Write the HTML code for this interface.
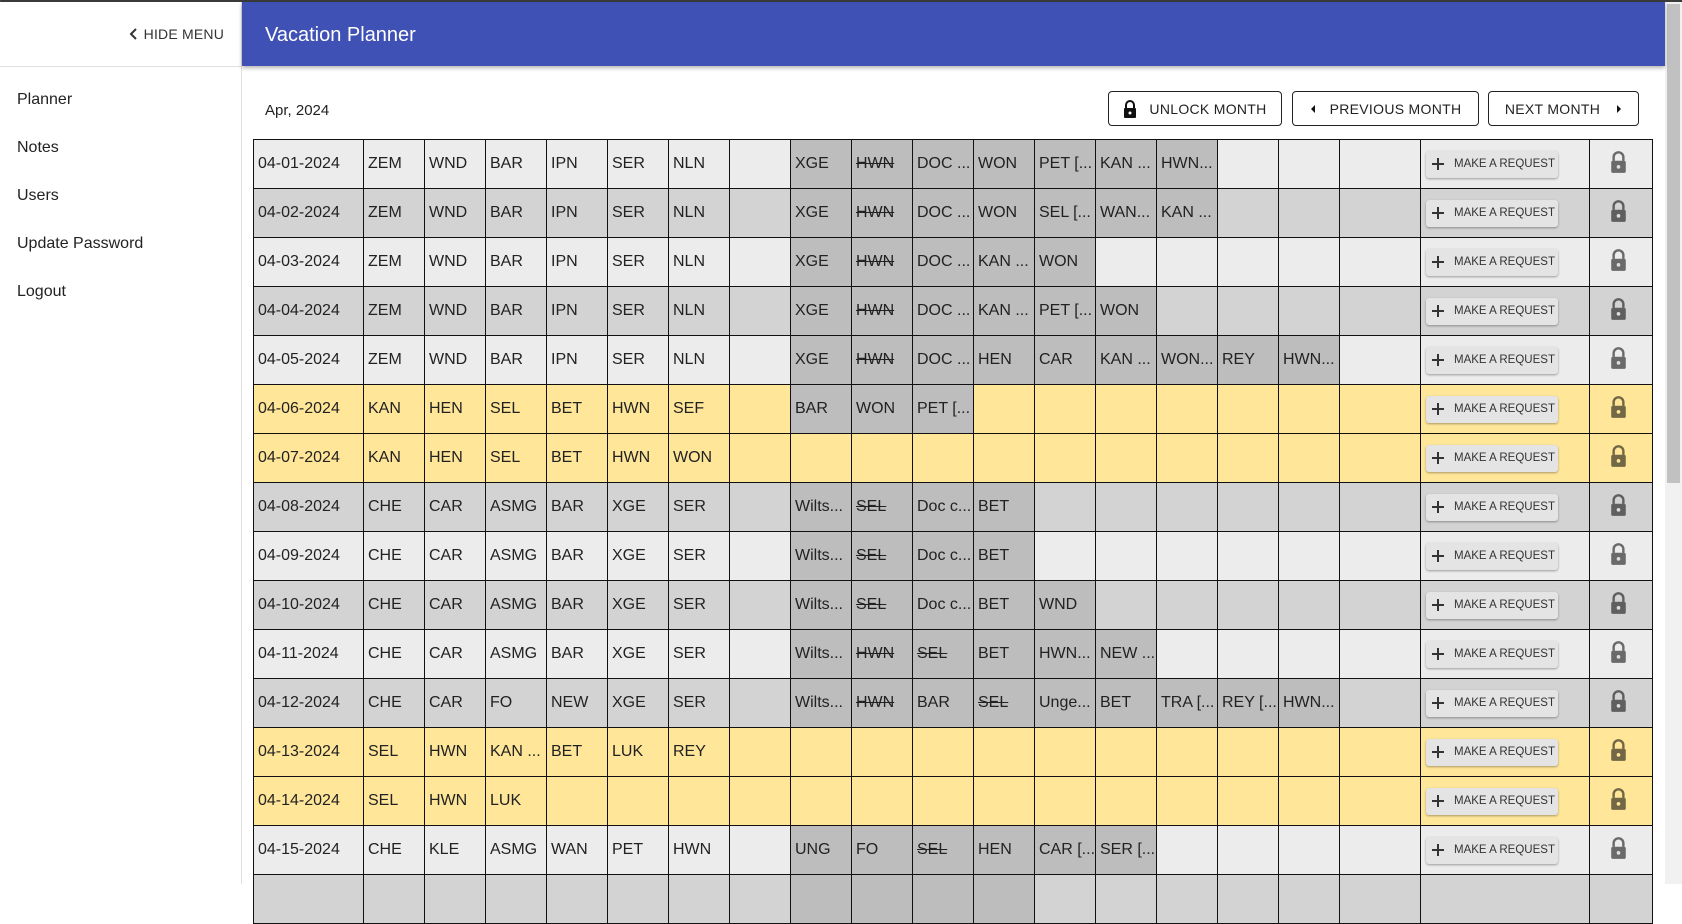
<!DOCTYPE html>
<html><head><meta charset="utf-8"><style>
*{box-sizing:border-box;margin:0;padding:0}
html,body{width:1682px;height:884px;overflow:hidden;background:#fff;font-family:"Liberation Sans",sans-serif;color:#222}
#frame{position:absolute;left:0;top:0;width:1682px;height:884px;border-top:2px solid #3a3a3a;border-left:1px solid #555}
#side{position:absolute;left:0;top:2px;width:242px;height:882px;border-right:1px solid #e0e0e0;background:#fff}
#hide{position:absolute;right:17px;top:24px;font-size:14px;color:#333;letter-spacing:.2px}
#hide svg{vertical-align:-1px;margin-right:6px}
#side .div{position:absolute;left:0;top:64px;width:242px;height:1px;background:#e0e0e0}
#side a{position:absolute;left:17px;font-size:16px;color:#222;text-decoration:none}
#hdr{position:absolute;left:242px;top:2px;width:1423px;height:64px;background:#3f51b5;box-shadow:0 2px 4px rgba(0,0,0,.3);color:#fff;font-size:20px;padding:22px 0 0 23px;z-index:2}
#month{position:absolute;left:265px;top:102px;font-size:15px;color:#222}
.btn{position:absolute;top:91px;height:35px;border:1px solid #222;border-radius:4px;font-size:14px;color:#222;display:flex;align-items:center;justify-content:center;letter-spacing:.3px;background:#fff}
#tbl{position:absolute;left:253px;top:139px;border-collapse:collapse;table-layout:fixed;width:1399px}
#tbl td{border:1px solid #111;height:49px;padding:0 4px;font-size:16px;white-space:nowrap;overflow:hidden;color:#222}
tr.l td{background:#ececec}
tr.d td{background:#d3d3d3}
tr.y td{background:#ffe699}
#tbl td.g{background:#bdbdbd}
s{text-decoration:line-through}
.rq{display:inline-flex;align-items:center;height:27px;width:132px;background:#e4e4e4;border-radius:3px;box-shadow:0 1px 2px rgba(0,0,0,.35);font-size:11.5px;color:#333;padding-left:6px;margin-left:1px}
.rq svg{margin-right:10px}
td.lk{text-align:center;padding-right:10px!important}
#sb{position:absolute;left:1665px;top:2px;width:17px;height:882px;background:#f1f1f1}
#th{position:absolute;left:1667px;top:4px;width:13px;height:479px;background:#c1c1c1}
</style></head><body>
<div id="frame"></div>
<div id="side">
<div id="hide"><svg width="9" height="12" viewBox="0 0 9 12"><path d="M7 1L2 6l5 5" stroke="#333" stroke-width="2" fill="none"/></svg>HIDE MENU</div>
<div class="div"></div>
<a style="top:89px">Planner</a>
<a style="top:137px">Notes</a>
<a style="top:185px">Users</a>
<a style="top:233px">Update Password</a>
<a style="top:281px">Logout</a>
</div>
<div id="hdr">Vacation Planner</div>
<div id="month">Apr, 2024</div>
<div class="btn" style="left:1108px;width:174px"><svg width="14" height="18" viewBox="0 0 14 18" style="margin-right:12px"><path d="M3 8V5a4 4 0 0 1 8 0v3" stroke="#111" stroke-width="2" fill="none"/><rect x="1" y="8" width="12" height="10" rx="1" fill="#111"/><circle cx="7" cy="13" r="1.5" fill="#fff"/></svg>UNLOCK MONTH</div>
<div class="btn" style="left:1292px;width:187px"><svg width="6" height="10" viewBox="0 0 6 10" style="margin-right:14px"><path d="M5 1L1 5l4 4z" fill="#111"/></svg>PREVIOUS MONTH</div>
<div class="btn" style="left:1488px;width:151px">NEXT MONTH<svg width="6" height="10" viewBox="0 0 6 10" style="margin-left:16px"><path d="M1 1l4 4-4 4z" fill="#111"/></svg></div>

<table id="tbl">
<colgroup><col style="width:110px"><col style="width:61px"><col style="width:61px"><col style="width:61px"><col style="width:61px"><col style="width:61px"><col style="width:61px"><col style="width:61px"><col style="width:61px"><col style="width:61px"><col style="width:61px"><col style="width:61px"><col style="width:61px"><col style="width:61px"><col style="width:61px"><col style="width:61px"><col style="width:61px"><col style="width:81px"><col style="width:169px"><col style="width:63px"></colgroup>
<tr class="l"><td>04-01-2024</td><td>ZEM</td><td>WND</td><td>BAR</td><td>IPN</td><td>SER</td><td>NLN</td><td></td><td class="g">XGE</td><td class="g"><s>HWN</s></td><td class="g">DOC ...</td><td class="g">WON</td><td class="g">PET [...</td><td class="g">KAN ...</td><td class="g">HWN...</td><td></td><td></td><td></td><td><span class="rq"><svg width="12" height="12"><path d="M6 0v12M0 6h12" stroke="#333" stroke-width="2"/></svg>MAKE A REQUEST</span></td><td class="lk"><svg width="17" height="22" viewBox="0 0 14 18"><path d="M3 8V5a4 4 0 0 1 8 0v3" stroke="rgba(0,0,0,.55)" stroke-width="2" fill="none"/><rect x="1" y="8" width="12" height="10" rx="1.5" fill="rgba(0,0,0,.55)"/><circle cx="7" cy="13" r="1.5" fill="#ddd"/></svg></td></tr>
<tr class="d"><td>04-02-2024</td><td>ZEM</td><td>WND</td><td>BAR</td><td>IPN</td><td>SER</td><td>NLN</td><td></td><td class="g">XGE</td><td class="g"><s>HWN</s></td><td class="g">DOC ...</td><td class="g">WON</td><td class="g">SEL [...</td><td class="g">WAN...</td><td class="g">KAN ...</td><td></td><td></td><td></td><td><span class="rq"><svg width="12" height="12"><path d="M6 0v12M0 6h12" stroke="#333" stroke-width="2"/></svg>MAKE A REQUEST</span></td><td class="lk"><svg width="17" height="22" viewBox="0 0 14 18"><path d="M3 8V5a4 4 0 0 1 8 0v3" stroke="rgba(0,0,0,.55)" stroke-width="2" fill="none"/><rect x="1" y="8" width="12" height="10" rx="1.5" fill="rgba(0,0,0,.55)"/><circle cx="7" cy="13" r="1.5" fill="#ddd"/></svg></td></tr>
<tr class="l"><td>04-03-2024</td><td>ZEM</td><td>WND</td><td>BAR</td><td>IPN</td><td>SER</td><td>NLN</td><td></td><td class="g">XGE</td><td class="g"><s>HWN</s></td><td class="g">DOC ...</td><td class="g">KAN ...</td><td class="g">WON</td><td></td><td></td><td></td><td></td><td></td><td><span class="rq"><svg width="12" height="12"><path d="M6 0v12M0 6h12" stroke="#333" stroke-width="2"/></svg>MAKE A REQUEST</span></td><td class="lk"><svg width="17" height="22" viewBox="0 0 14 18"><path d="M3 8V5a4 4 0 0 1 8 0v3" stroke="rgba(0,0,0,.55)" stroke-width="2" fill="none"/><rect x="1" y="8" width="12" height="10" rx="1.5" fill="rgba(0,0,0,.55)"/><circle cx="7" cy="13" r="1.5" fill="#ddd"/></svg></td></tr>
<tr class="d"><td>04-04-2024</td><td>ZEM</td><td>WND</td><td>BAR</td><td>IPN</td><td>SER</td><td>NLN</td><td></td><td class="g">XGE</td><td class="g"><s>HWN</s></td><td class="g">DOC ...</td><td class="g">KAN ...</td><td class="g">PET [...</td><td class="g">WON</td><td></td><td></td><td></td><td></td><td><span class="rq"><svg width="12" height="12"><path d="M6 0v12M0 6h12" stroke="#333" stroke-width="2"/></svg>MAKE A REQUEST</span></td><td class="lk"><svg width="17" height="22" viewBox="0 0 14 18"><path d="M3 8V5a4 4 0 0 1 8 0v3" stroke="rgba(0,0,0,.55)" stroke-width="2" fill="none"/><rect x="1" y="8" width="12" height="10" rx="1.5" fill="rgba(0,0,0,.55)"/><circle cx="7" cy="13" r="1.5" fill="#ddd"/></svg></td></tr>
<tr class="l"><td>04-05-2024</td><td>ZEM</td><td>WND</td><td>BAR</td><td>IPN</td><td>SER</td><td>NLN</td><td></td><td class="g">XGE</td><td class="g"><s>HWN</s></td><td class="g">DOC ...</td><td class="g">HEN</td><td class="g">CAR</td><td class="g">KAN ...</td><td class="g">WON...</td><td class="g">REY</td><td class="g">HWN...</td><td></td><td><span class="rq"><svg width="12" height="12"><path d="M6 0v12M0 6h12" stroke="#333" stroke-width="2"/></svg>MAKE A REQUEST</span></td><td class="lk"><svg width="17" height="22" viewBox="0 0 14 18"><path d="M3 8V5a4 4 0 0 1 8 0v3" stroke="rgba(0,0,0,.55)" stroke-width="2" fill="none"/><rect x="1" y="8" width="12" height="10" rx="1.5" fill="rgba(0,0,0,.55)"/><circle cx="7" cy="13" r="1.5" fill="#ddd"/></svg></td></tr>
<tr class="y"><td>04-06-2024</td><td>KAN</td><td>HEN</td><td>SEL</td><td>BET</td><td>HWN</td><td>SEF</td><td></td><td class="g">BAR</td><td class="g">WON</td><td class="g">PET [...</td><td></td><td></td><td></td><td></td><td></td><td></td><td></td><td><span class="rq"><svg width="12" height="12"><path d="M6 0v12M0 6h12" stroke="#333" stroke-width="2"/></svg>MAKE A REQUEST</span></td><td class="lk"><svg width="17" height="22" viewBox="0 0 14 18"><path d="M3 8V5a4 4 0 0 1 8 0v3" stroke="rgba(0,0,0,.55)" stroke-width="2" fill="none"/><rect x="1" y="8" width="12" height="10" rx="1.5" fill="rgba(0,0,0,.55)"/><circle cx="7" cy="13" r="1.5" fill="#ffe699"/></svg></td></tr>
<tr class="y"><td>04-07-2024</td><td>KAN</td><td>HEN</td><td>SEL</td><td>BET</td><td>HWN</td><td>WON</td><td></td><td></td><td></td><td></td><td></td><td></td><td></td><td></td><td></td><td></td><td></td><td><span class="rq"><svg width="12" height="12"><path d="M6 0v12M0 6h12" stroke="#333" stroke-width="2"/></svg>MAKE A REQUEST</span></td><td class="lk"><svg width="17" height="22" viewBox="0 0 14 18"><path d="M3 8V5a4 4 0 0 1 8 0v3" stroke="rgba(0,0,0,.55)" stroke-width="2" fill="none"/><rect x="1" y="8" width="12" height="10" rx="1.5" fill="rgba(0,0,0,.55)"/><circle cx="7" cy="13" r="1.5" fill="#ffe699"/></svg></td></tr>
<tr class="d"><td>04-08-2024</td><td>CHE</td><td>CAR</td><td>ASMG</td><td>BAR</td><td>XGE</td><td>SER</td><td></td><td class="g">Wilts...</td><td class="g"><s>SEL</s></td><td class="g">Doc c...</td><td class="g">BET</td><td></td><td></td><td></td><td></td><td></td><td></td><td><span class="rq"><svg width="12" height="12"><path d="M6 0v12M0 6h12" stroke="#333" stroke-width="2"/></svg>MAKE A REQUEST</span></td><td class="lk"><svg width="17" height="22" viewBox="0 0 14 18"><path d="M3 8V5a4 4 0 0 1 8 0v3" stroke="rgba(0,0,0,.55)" stroke-width="2" fill="none"/><rect x="1" y="8" width="12" height="10" rx="1.5" fill="rgba(0,0,0,.55)"/><circle cx="7" cy="13" r="1.5" fill="#ddd"/></svg></td></tr>
<tr class="l"><td>04-09-2024</td><td>CHE</td><td>CAR</td><td>ASMG</td><td>BAR</td><td>XGE</td><td>SER</td><td></td><td class="g">Wilts...</td><td class="g"><s>SEL</s></td><td class="g">Doc c...</td><td class="g">BET</td><td></td><td></td><td></td><td></td><td></td><td></td><td><span class="rq"><svg width="12" height="12"><path d="M6 0v12M0 6h12" stroke="#333" stroke-width="2"/></svg>MAKE A REQUEST</span></td><td class="lk"><svg width="17" height="22" viewBox="0 0 14 18"><path d="M3 8V5a4 4 0 0 1 8 0v3" stroke="rgba(0,0,0,.55)" stroke-width="2" fill="none"/><rect x="1" y="8" width="12" height="10" rx="1.5" fill="rgba(0,0,0,.55)"/><circle cx="7" cy="13" r="1.5" fill="#ddd"/></svg></td></tr>
<tr class="d"><td>04-10-2024</td><td>CHE</td><td>CAR</td><td>ASMG</td><td>BAR</td><td>XGE</td><td>SER</td><td></td><td class="g">Wilts...</td><td class="g"><s>SEL</s></td><td class="g">Doc c...</td><td class="g">BET</td><td class="g">WND</td><td></td><td></td><td></td><td></td><td></td><td><span class="rq"><svg width="12" height="12"><path d="M6 0v12M0 6h12" stroke="#333" stroke-width="2"/></svg>MAKE A REQUEST</span></td><td class="lk"><svg width="17" height="22" viewBox="0 0 14 18"><path d="M3 8V5a4 4 0 0 1 8 0v3" stroke="rgba(0,0,0,.55)" stroke-width="2" fill="none"/><rect x="1" y="8" width="12" height="10" rx="1.5" fill="rgba(0,0,0,.55)"/><circle cx="7" cy="13" r="1.5" fill="#ddd"/></svg></td></tr>
<tr class="l"><td>04-11-2024</td><td>CHE</td><td>CAR</td><td>ASMG</td><td>BAR</td><td>XGE</td><td>SER</td><td></td><td class="g">Wilts...</td><td class="g"><s>HWN</s></td><td class="g"><s>SEL</s></td><td class="g">BET</td><td class="g">HWN...</td><td class="g">NEW ...</td><td></td><td></td><td></td><td></td><td><span class="rq"><svg width="12" height="12"><path d="M6 0v12M0 6h12" stroke="#333" stroke-width="2"/></svg>MAKE A REQUEST</span></td><td class="lk"><svg width="17" height="22" viewBox="0 0 14 18"><path d="M3 8V5a4 4 0 0 1 8 0v3" stroke="rgba(0,0,0,.55)" stroke-width="2" fill="none"/><rect x="1" y="8" width="12" height="10" rx="1.5" fill="rgba(0,0,0,.55)"/><circle cx="7" cy="13" r="1.5" fill="#ddd"/></svg></td></tr>
<tr class="d"><td>04-12-2024</td><td>CHE</td><td>CAR</td><td>FO</td><td>NEW</td><td>XGE</td><td>SER</td><td></td><td class="g">Wilts...</td><td class="g"><s>HWN</s></td><td class="g">BAR</td><td class="g"><s>SEL</s></td><td class="g">Unge...</td><td class="g">BET</td><td class="g">TRA [...</td><td class="g">REY [...</td><td class="g">HWN...</td><td></td><td><span class="rq"><svg width="12" height="12"><path d="M6 0v12M0 6h12" stroke="#333" stroke-width="2"/></svg>MAKE A REQUEST</span></td><td class="lk"><svg width="17" height="22" viewBox="0 0 14 18"><path d="M3 8V5a4 4 0 0 1 8 0v3" stroke="rgba(0,0,0,.55)" stroke-width="2" fill="none"/><rect x="1" y="8" width="12" height="10" rx="1.5" fill="rgba(0,0,0,.55)"/><circle cx="7" cy="13" r="1.5" fill="#ddd"/></svg></td></tr>
<tr class="y"><td>04-13-2024</td><td>SEL</td><td>HWN</td><td>KAN ...</td><td>BET</td><td>LUK</td><td>REY</td><td></td><td></td><td></td><td></td><td></td><td></td><td></td><td></td><td></td><td></td><td></td><td><span class="rq"><svg width="12" height="12"><path d="M6 0v12M0 6h12" stroke="#333" stroke-width="2"/></svg>MAKE A REQUEST</span></td><td class="lk"><svg width="17" height="22" viewBox="0 0 14 18"><path d="M3 8V5a4 4 0 0 1 8 0v3" stroke="rgba(0,0,0,.55)" stroke-width="2" fill="none"/><rect x="1" y="8" width="12" height="10" rx="1.5" fill="rgba(0,0,0,.55)"/><circle cx="7" cy="13" r="1.5" fill="#ffe699"/></svg></td></tr>
<tr class="y"><td>04-14-2024</td><td>SEL</td><td>HWN</td><td>LUK</td><td></td><td></td><td></td><td></td><td></td><td></td><td></td><td></td><td></td><td></td><td></td><td></td><td></td><td></td><td><span class="rq"><svg width="12" height="12"><path d="M6 0v12M0 6h12" stroke="#333" stroke-width="2"/></svg>MAKE A REQUEST</span></td><td class="lk"><svg width="17" height="22" viewBox="0 0 14 18"><path d="M3 8V5a4 4 0 0 1 8 0v3" stroke="rgba(0,0,0,.55)" stroke-width="2" fill="none"/><rect x="1" y="8" width="12" height="10" rx="1.5" fill="rgba(0,0,0,.55)"/><circle cx="7" cy="13" r="1.5" fill="#ffe699"/></svg></td></tr>
<tr class="l"><td>04-15-2024</td><td>CHE</td><td>KLE</td><td>ASMG</td><td>WAN</td><td>PET</td><td>HWN</td><td></td><td class="g">UNG</td><td class="g">FO</td><td class="g"><s>SEL</s></td><td class="g">HEN</td><td class="g">CAR [...</td><td class="g">SER [...</td><td></td><td></td><td></td><td></td><td><span class="rq"><svg width="12" height="12"><path d="M6 0v12M0 6h12" stroke="#333" stroke-width="2"/></svg>MAKE A REQUEST</span></td><td class="lk"><svg width="17" height="22" viewBox="0 0 14 18"><path d="M3 8V5a4 4 0 0 1 8 0v3" stroke="rgba(0,0,0,.55)" stroke-width="2" fill="none"/><rect x="1" y="8" width="12" height="10" rx="1.5" fill="rgba(0,0,0,.55)"/><circle cx="7" cy="13" r="1.5" fill="#ddd"/></svg></td></tr>
<tr class="d"><td></td><td></td><td></td><td></td><td></td><td></td><td></td><td></td><td class="g"></td><td class="g"></td><td class="g"></td><td class="g"></td><td></td><td></td><td></td><td></td><td></td><td></td><td></td><td></td></tr>
</table>
<div id="sb"></div><div id="th"></div>
</body></html>
